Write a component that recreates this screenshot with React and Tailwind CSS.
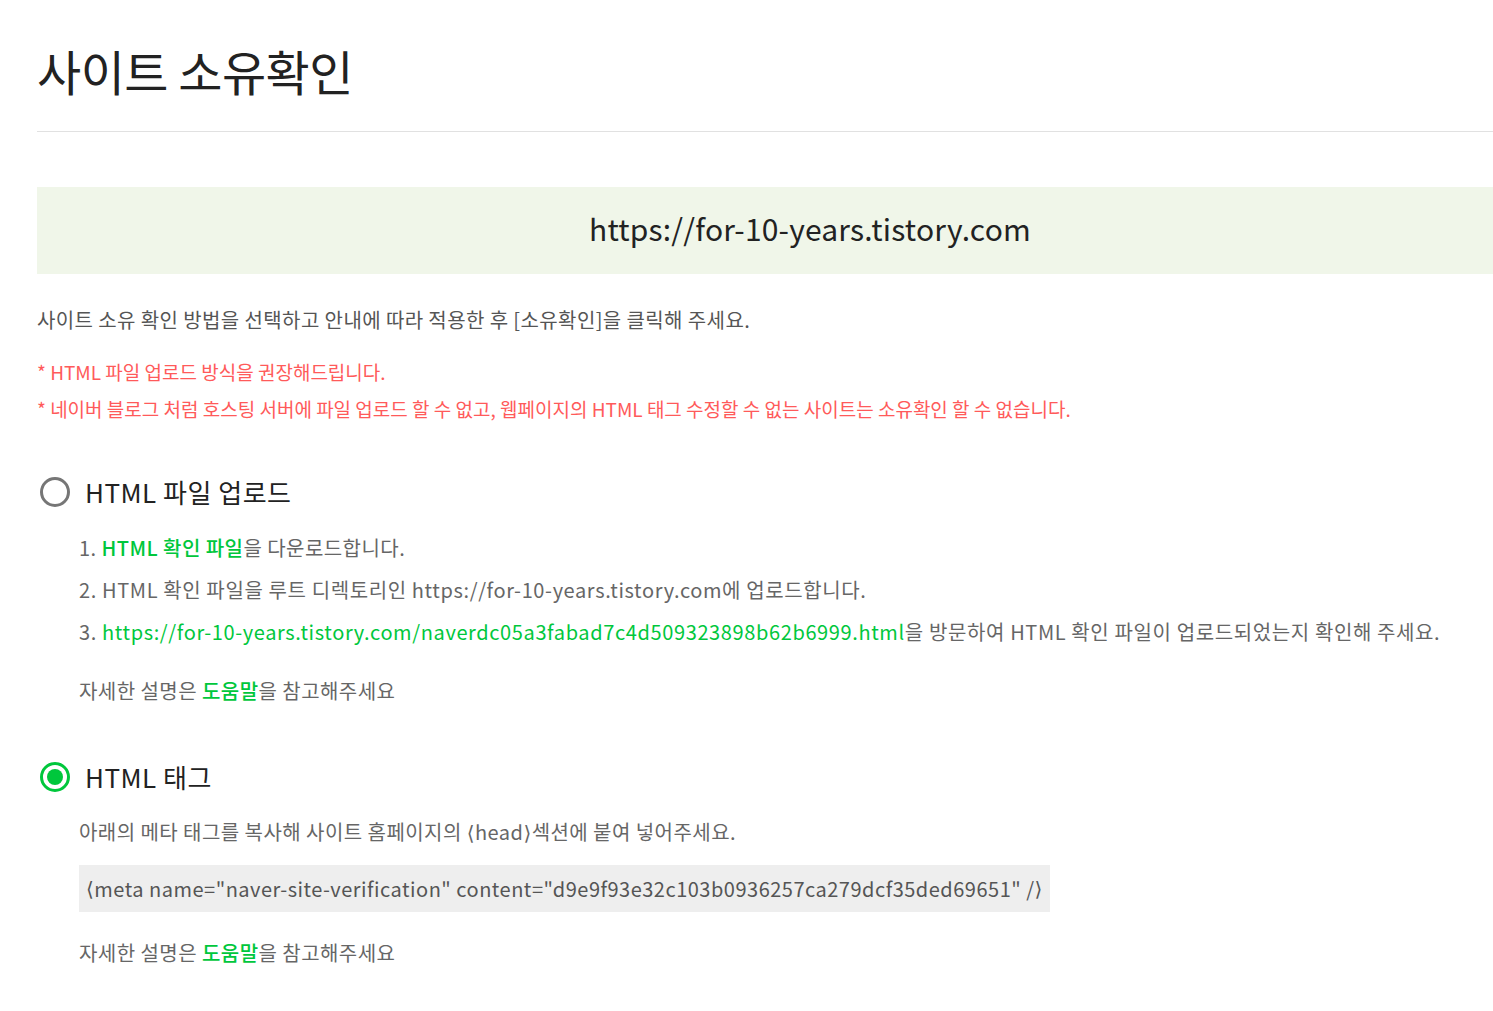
export default function App() {
  const font = { fontFamily: '"Noto Sans CJK KR", "Noto Sans", sans-serif' };
  const green = "text-[#00c73c]";
  const bracket = { fontFamily: '"DejaVu Sans", sans-serif' };
  return (
    <div className="min-h-[1011px] overflow-hidden bg-white pl-[37px]" style={font}>
      <div className="w-[1546px]">
        <h1 className="pt-[41px] text-[48px] leading-[58px] font-normal text-[#222] tracking-[-0.5px]">
          사이트 소유확인
        </h1>
        <div className="mt-[32px] border-t border-[#e1e1e1]" />
        <div className="mt-[55px] flex h-[87px] items-center justify-center bg-[#f0f6e9] pb-[5px] text-[30px] tracking-[0.2px] text-[#222]">
          https://for-10-years.tistory.com
        </div>
        <p className="mt-[33px] text-[20px] leading-[26px] text-[#555] tracking-[0.4px]">
          사이트 소유 확인 방법을 선택하고 안내에 따라 적용한 후 [소유확인]을 클릭해 주세요.
        </p>
        <p className="mt-[26px] text-[19px] leading-[26px] text-[#ff5a5a]">
          * HTML 파일 업로드 방식을 권장해드립니다.
        </p>
        <p className="mt-[11px] text-[19px] leading-[26px] text-[#ff5a5a]">
          * 네이버 블로그 처럼 호스팅 서버에 파일 업로드 할 수 없고, 웹페이지의 HTML 태그 수정할 수 없는 사이트는 소유확인 할 수 없습니다.
        </p>

        <div className="mt-[55px] flex h-[30px] items-center">
          <span className="ml-[3px] h-[30px] w-[30px] rounded-full border-[3px] border-[#767676] bg-white" />
          <span className="ml-[15px] text-[26px] leading-[30px] tracking-[0.5px] text-[#222]">HTML 파일 업로드</span>
        </div>
        <div className="pl-[42px] text-[20px] leading-[42px] text-[#666] tracking-[0.45px]">
          <ol className="mt-[20px]">
            <li>
              1. <span className={`${green} font-medium`}>HTML 확인 파일</span>을 다운로드합니다.
            </li>
            <li className="tracking-[0.62px]">
              2. HTML 확인 파일을 루트 디렉토리인 https://for-10-years.tistory.com에 업로드합니다.
            </li>
            <li className="tracking-[0.62px]">
              3.{" "}
              <span className={green}>
                https://for-10-years.tistory.com/naverdc05a3fabad7c4d509323898b62b6999.html
              </span>
              을 방문하여 HTML 확인 파일이 업로드되었는지 확인해 주세요.
            </li>
          </ol>
          <p className="mt-[25px] leading-[26px]">
            자세한 설명은 <span className={`${green} font-medium`}>도움말</span>을 참고해주세요
          </p>
        </div>

        <div className="mt-[58px] flex h-[30px] items-center">
          <span className="ml-[3px] flex h-[30px] w-[30px] items-center justify-center rounded-full border-[3px] border-[#00c73c] bg-white">
            <span className="h-[16px] w-[16px] rounded-full bg-[#00c73c]" />
          </span>
          <span className="ml-[15px] text-[26px] leading-[30px] tracking-[0.5px] text-[#222]">HTML 태그</span>
        </div>
        <div className="pl-[42px] text-[20px] text-[#666] tracking-[0.45px]">
          <p className="mt-[27px] leading-[26px]">
            아래의 메타 태그를 복사해 사이트 홈페이지의 <span style={bracket}>⟨</span>head<span style={bracket}>⟩</span>섹션에 붙여 넣어주세요.
          </p>
          <div className="mt-[19px] flex h-[47px] w-fit items-center bg-[#eeeeee] px-[7px] text-[20px] tracking-[0.5px] text-[#555]">
            <span style={bracket}>⟨</span>meta name="naver-site-verification" content="d9e9f93e32c103b0936257ca279dcf35ded69651" /<span style={bracket}>⟩</span>
          </div>
          <p className="mt-[28px] leading-[26px]">
            자세한 설명은 <span className={`${green} font-medium`}>도움말</span>을 참고해주세요
          </p>
        </div>
      </div>
    </div>
  );
}
